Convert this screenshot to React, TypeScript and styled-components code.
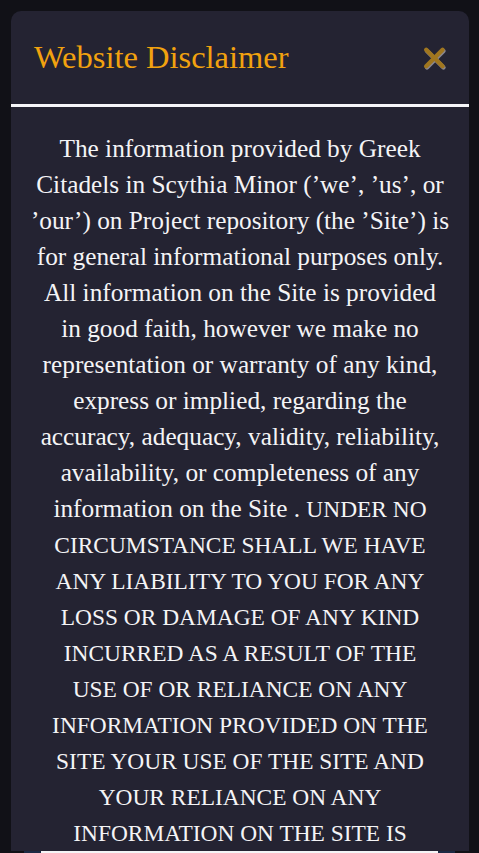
import React from "react";
import styled, { createGlobalStyle } from "styled-components";

const GlobalStyle = createGlobalStyle`
  html, body {
    margin: 0;
    padding: 0;
    background: #111117;
    overflow: hidden;
  }
  * { box-sizing: border-box; }
`;

const Backdrop = styled.div`
  width: 479px;
  height: 853px;
  background: #111117;
  display: flex;
  flex-direction: column;
  align-items: stretch;
  padding: 11px 10px 0 11px;
`;

const Modal = styled.section`
  height: 840px;
  flex: none;
  background: #242332;
  border-radius: 10px 10px 0 0;
  overflow: hidden;
  display: flex;
  flex-direction: column;
`;

const Header = styled.header`
  height: 93px;
  flex: none;
  display: flex;
  align-items: center;
  justify-content: space-between;
  padding: 0 22px 0 23px;
`;

const Title = styled.h2`
  margin: 0;
  font-family: "Liberation Serif", "Times New Roman", serif;
  font-weight: 400;
  font-size: 32.5px;
  color: #f2a20f;
  line-height: 1;
  padding-top: 0px;
`;

const CloseButton = styled.button`
  border: none;
  background: transparent;
  padding: 0;
  width: 24px;
  height: 26px;
  display: flex;
  align-items: center;
  justify-content: center;
  cursor: pointer;
  margin-top: 3px;
`;

const Divider = styled.hr`
  margin: 0;
  border: none;
  height: 3px;
  background: #f6f6fa;
  flex: none;
`;

const Body = styled.div`
  padding: 23px 10px 0 10px;
  font-family: "Liberation Serif", "Times New Roman", serif;
  font-size: 25.3px;
  line-height: 36px;
  color: #f4f4f6;
  text-align: center;
  white-space: nowrap;
`;

const Paragraph = styled.p`
  margin: 0;
`;

const Shout = styled.span`
  font-size: 23.4px;
  line-height: 1;
`;

const BottomStrip = styled.div`
  height: 2px;
  flex: none;
  display: flex;
  padding: 0 0 0 13px;
`;

const StripPart = styled.div<{ $w: number; $c: string }>`
  width: ${(p) => p.$w}px;
  height: 100%;
  background: ${(p) => p.$c};
`;

const CloseIcon = () => (
  <svg width="24" height="26" viewBox="0 0 24 26" aria-hidden="true">
    <g stroke="#8a8790" strokeWidth="4.4" strokeLinecap="round">
      <line x1="4" y1="5" x2="20.5" y2="21.5" />
      <line x1="20.5" y1="5" x2="4" y2="21.5" />
    </g>
    <g stroke="#a0761f" strokeWidth="4.4" strokeLinecap="round">
      <line x1="3.2" y1="3.8" x2="19.6" y2="20.2" />
      <line x1="19.6" y1="3.8" x2="3.2" y2="20.2" />
    </g>
  </svg>
);

export default function App() {
  return (
    <>
      <GlobalStyle />
      <Backdrop>
        <Modal>
          <Header>
            <Title>Website Disclaimer</Title>
            <CloseButton aria-label="Close">
              <CloseIcon />
            </CloseButton>
          </Header>
          <Divider />
          <Body>
            <Paragraph>
              The information provided by Greek
              <br />
              Citadels in Scythia Minor (’we’, ’us’, or
              <br />
              ’our’) on Project repository (the ’Site’) is
              <br />
              for general informational purposes only.
              <br />
              All information on the Site is provided
              <br />
              in good faith, however we make no
              <br />
              representation or warranty of any kind,
              <br />
              express or implied, regarding the
              <br />
              accuracy, adequacy, validity, reliability,
              <br />
              availability, or completeness of any
              <br />
              information on the Site . <Shout>UNDER NO</Shout>
              <br />
              <Shout>
                CIRCUMSTANCE SHALL WE HAVE
                <br />
                ANY LIABILITY TO YOU FOR ANY
                <br />
                LOSS OR DAMAGE OF ANY KIND
                <br />
                INCURRED AS A RESULT OF THE
                <br />
                USE OF OR RELIANCE ON ANY
                <br />
                INFORMATION PROVIDED ON THE
                <br />
                SITE YOUR USE OF THE SITE AND
                <br />
                YOUR RELIANCE ON ANY
                <br />
                INFORMATION ON THE SITE IS
                <br />
                SOLELY AT YOUR OWN RISK.
              </Shout>
            </Paragraph>
          </Body>
        </Modal>
        <BottomStrip>
          <StripPart $w={17} $c="#1c2a44" />
          <StripPart $w={397} $c="#f4f4f6" />
          <StripPart $w={17} $c="#1c2a44" />
        </BottomStrip>
      </Backdrop>
    </>
  );
}
